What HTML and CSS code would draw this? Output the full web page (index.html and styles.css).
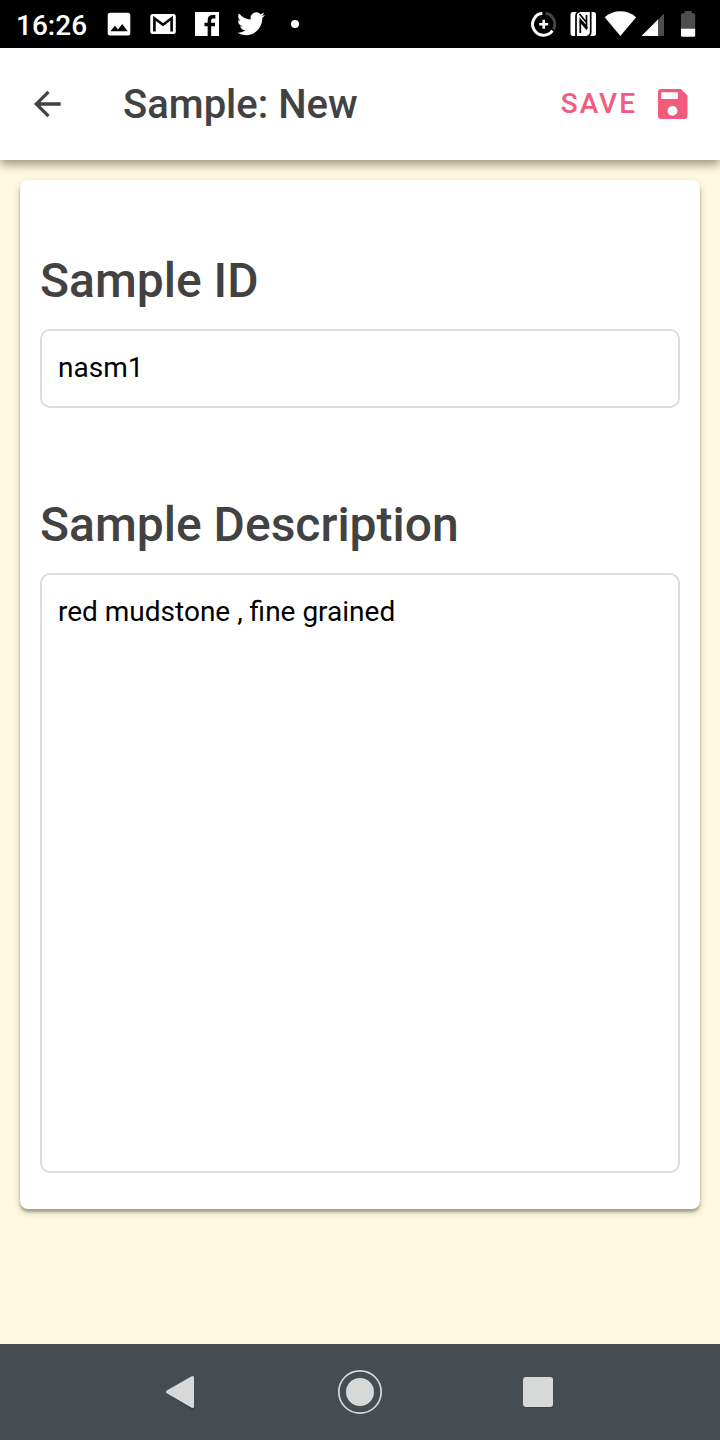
FILE: index.html
```html
<!DOCTYPE html>
<html lang="en">
<head>
<meta charset="utf-8">
<title>Sample: New</title>
<link rel="stylesheet" href="styles.css">
</head>
<body>
<div class="screen">
  <div class="status">
    <span class="clock">16:26</span>
    <div class="notifications">
      <svg width="44" height="48" viewBox="0 0 44 48"><path fill="#fff" fill-rule="evenodd" d="M13.200 12.700h17.600a2.500 2.500 0 0 1 2.500 2.500v17.700a2.500 2.500 0 0 1-2.500 2.500H13.200a2.500 2.500 0 0 1-2.500-2.500V15.200a2.500 2.500 0 0 1 2.500-2.500zM13.500 31.300h17.200l-5.500-7.300-4.300 5.500-3-3.700z"/></svg>
      <svg width="44" height="48" viewBox="0 0 44 48"><rect x="9.300" y="14" width="25.500" height="20" rx="2.500" fill="#fff"/><path d="M13.400 31.500V18.300L22 24.700l8.600-6.400v13.200" fill="none" stroke="#000" stroke-width="2.600"/></svg>
      <svg width="44" height="48" viewBox="0 0 44 48"><path fill="#fff" d="M10 12h24v24H10z"/><path fill="none" stroke="#000" stroke-width="3.500" d="M24.400 36.500V20.400q0-3.600 3.400-3.600h2.600M19.500 24.500h10.500"/></svg>
      <svg width="44" height="48" viewBox="0 0 44 48"><path fill="#fff" transform="translate(8 9.700) scale(1.170)" d="M23.950 4.570a10 10 0 0 1-2.820.77 4.960 4.960 0 0 0 2.160-2.720c-.95.550-2 .95-3.130 1.180a4.920 4.920 0 0 0-8.380 4.480C7.690 8.090 4.070 6.130 1.640 3.160a4.820 4.820 0 0 0-.67 2.480c0 1.710.87 3.210 2.190 4.100a4.900 4.900 0 0 1-2.230-.62v.06a4.920 4.920 0 0 0 3.950 4.830 5 5 0 0 1-2.210.08 4.940 4.940 0 0 0 4.600 3.420A9.870 9.870 0 0 1 0 19.540a14 14 0 0 0 7.550 2.210c9.050 0 14-7.500 14-13.980 0-.21 0-.42-.02-.63a9.940 9.940 0 0 0 2.460-2.550z"/></svg>
      <svg width="44" height="48" viewBox="0 0 44 48"><circle cx="22" cy="24" r="4" fill="#fff"/></svg>
    </div>
    <div class="system">
      <svg width="40" height="48" viewBox="528 0 40 48"><g fill="none" stroke-width="3"><path stroke="#444" d="M545.300 13.200a11 11 0 0 1 8.200 16"/><path stroke="#fff" d="M542.300 13.300a11 11 0 1 0 10.200 17.400"/><path stroke="#fff" stroke-width="2.500" d="M543.700 19.700v9M539.200 24.200h9"/></g></svg>
      <svg width="34" height="48" viewBox="568 0 34 48"><rect x="570.500" y="12" width="25.500" height="24" rx="2.500" fill="#fff"/><path d="M576 36.300V16q0-4 4-4.500M580.300 33V19.500l7.200 8.300M579.500 14l7.500 9M586.500 15v13.500M579.500 20.500l7.500 9M590.700 11.700V32q0 4-4 4.500" fill="none" stroke="#000" stroke-width="1.700"/></svg>
      <svg width="36" height="48" viewBox="602 0 36 48"><path fill="#fff" d="M604.700 17.200c9-7.800 22.400-7.800 31.400 0L620.400 36z"/></svg>
      <svg width="28" height="48" viewBox="638 0 28 48"><path fill="#4d4d4d" d="M664 13.500V36h-22.500z"/><path fill="#fff" d="M658 19.500V36h-16.500z"/></svg>
      <svg width="32" height="48" viewBox="666 0 32 48"><path fill="#4d4d4d" d="M684.500 11h7.200v2.300h1.800q1.700 0 1.700 1.700v14H681V15q0-1.700 1.700-1.700h1.800z"/><path fill="#fff" d="M681 28.700h14.200v6.500q0 1.500-1.500 1.500h-11.200q-1.500 0-1.500-1.500z"/></svg>
    </div>
  </div>
  <header class="bar">
    <svg class="back" width="40" height="40" viewBox="0 0 24 24"><path fill="#424242" d="M20.200 11H8.030l5.590-5.590L12.200 4l-8 8 8 8 1.410-1.410L8.030 13H20.200v-2z"/></svg>
    <h1 class="title">Sample: New</h1>
    <span class="save">SAVE</span>
    <svg class="disk" width="30" height="30" viewBox="0 0 30 30"><path fill="#f25c7c" fill-rule="evenodd" d="M3 0h20l6.500 6.500V27a3 3 0 0 1-3 3H3a3 3 0 0 1-3-3V3a3 3 0 0 1 3-3zM3.200 3.200v6.700h16.700V3.200zM14.500 17a4.900 4.900 0 1 0 0 9.800a4.900 4.900 0 1 0 0-9.800z"/></svg>
  </header>
  <main class="content">
    <section class="card">
      <h2 class="label">Sample ID</h2>
      <div class="field">nasm1</div>
      <h2 class="label second">Sample Description</h2>
      <div class="field area">red mudstone , fine grained</div>
    </section>
  </main>
  <nav class="nav">
    <svg width="178" height="96" viewBox="93 1344 178 96"><path d="M167.500 1391.500L192.500 1377V1407.500z" transform="translate(0 1)" fill="#3b4144" stroke="#3b4144" stroke-width="3" stroke-linejoin="round"/><path d="M167.500 1391.900L192.500 1377.500V1406.500z" fill="#d7d9d8" stroke="#d7d9d8" stroke-width="3" stroke-linejoin="round"/></svg>
    <svg width="178" height="96" viewBox="271 1344 178 96"><circle cx="360" cy="1392" r="21.200" fill="none" stroke="#d7d9d8" stroke-width="1.700"/><circle cx="360" cy="1392" r="14" fill="#d7d9d8"/></svg>
    <svg width="178" height="96" viewBox="449 1344 178 96"><rect x="523" y="1378" width="30" height="30" rx="3" fill="#3b4144"/><rect x="523" y="1377" width="30" height="30" rx="3" fill="#d7d9d8"/></svg>
  </nav>
</div>
</body>
</html>
```
FILE: styles.css
```css
* { box-sizing: border-box; }
body { margin: 0; font-family: Roboto, sans-serif; }
svg { display: block; flex: none; }
h1, h2 { margin: 0; font-weight: 500; }
.screen { display: flex; flex-direction: column; width: 720px; height: 1440px; background: #fff9e1; overflow: hidden; }
.status { display: flex; height: 48px; padding: 0 22px 0 16px; background: #000; color: #fff; }
.clock { width: 81px; font-size: 28px; font-weight: 500; line-height: 52px; }
.notifications, .system { display: flex; }
.system { margin-left: auto; }
.bar { position: relative; display: flex; align-items: center; height: 112px; padding: 0 32px 0 27px; background: #fff; box-shadow: 0 5px 9px rgba(30, 40, 0, .36), 0 2px 10px rgba(30, 40, 0, .14); }
.title { margin-left: 56px; padding-top: 2px; color: #424242; font-size: 40px; line-height: 48px; white-space: nowrap; }
.save { margin-left: auto; margin-right: 21px; color: #f25c7c; font-size: 28px; font-weight: 500; letter-spacing: 2px; line-height: 32px; }
.content { flex: 1; padding: 20px; }
.card { position: relative; height: 1029px; padding: 72px 20px 0; background: #fff; border-radius: 8px; box-shadow: 0 3px 3px rgba(30, 40, 0, .34), 0 3px 8px rgba(30, 40, 0, .16); }
.label { color: #424242; font-size: 48px; line-height: 57px; }
.second { margin-top: 88px; }
.field { height: 79px; margin-top: 20px; padding: 20px 16px; border: 2px solid #ddd; border-radius: 10px; color: #000; font-size: 28px; line-height: 33px; }
.area { height: 600px; }
.nav { display: flex; justify-content: center; height: 96px; background: #454d52; }
```
